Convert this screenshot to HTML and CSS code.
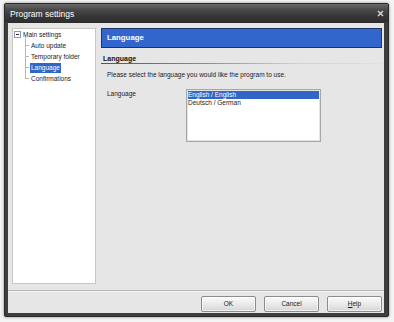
FILE: index.html
```html
<!DOCTYPE html>
<html>
<head>
<meta charset="utf-8">
<link rel="stylesheet" href="styles.css">
</head>
<body>
<div class="window">
  <div class="titlebar">
    <span class="title">Program settings</span>
    <svg class="close" width="7" height="7" viewBox="0 0 7 7"><path d="M1 1L6 6M6 1L1 6" stroke="#d8d8d8" stroke-width="1.4"/></svg>
  </div>
  <div class="client">
    <div class="main">
      <div class="tree">
        <div class="node root">
          <svg class="expander" width="7" height="7" viewBox="0 0 7 7"><rect x="0.5" y="0.5" width="6" height="6" fill="#fff" stroke="#8a9ab4"/><path d="M2 3.5H5" stroke="#333" stroke-width="1"/></svg>
          <span class="label">Main settings</span>
        </div>
        <div class="children">
          <div class="node child"><span class="label">Auto update</span></div>
          <div class="node child"><span class="label">Temporary folder</span></div>
          <div class="node child"><span class="label selected">Language</span></div>
          <div class="node child last"><span class="label">Confirmations</span></div>
        </div>
      </div>
      <div class="page">
        <div class="header">Language</div>
        <div class="section-title">Language</div>
        <div class="section-rule"></div>
        <div class="intro">Please select the language you would like the program to use.</div>
        <div class="form-row">
          <div class="form-label">Language</div>
          <div class="listbox">
            <div class="item selected">English / English</div>
            <div class="item">Deutsch / German</div>
          </div>
        </div>
      </div>
    </div>
    <div class="separator"></div>
    <div class="footer">
      <button class="btn">OK</button>
      <button class="btn">Cancel</button>
      <button class="btn"><u>H</u>elp</button>
    </div>
  </div>
</div>
</body>
</html>
```
FILE: styles.css
```css
html, body {
  margin: 0;
  padding: 0;
  background: #f4f4f4;
}
body {
  width: 394px;
  height: 322px;
  overflow: hidden;
  font-family: "Liberation Sans", Arial, sans-serif;
}
.window {
  margin: 3px 0 0 4px;
  width: 385px;
  height: 314px;
  box-sizing: border-box;
  background: #3e3e3e;
  border: 1px solid #2a2a2a;
  border-radius: 2px;
  box-shadow: 0 0 3px rgba(0,0,0,0.45);
  display: flex;
  flex-direction: column;
}
.titlebar {
  height: 18px;
  flex: none;
  display: flex;
  align-items: center;
  justify-content: space-between;
  padding: 0 4px 0 5px;
  background: linear-gradient(#6a6a6a 0%, #4a4a4a 30%, #363636 70%, #2e2e2e 100%);
}
.title {
  color: #ffffff;
  font-size: 8.5px;
  line-height: 10px;
  padding-top: 1px;
}
.close {
  display: block;
  margin-top: 1px;
}
.client {
  flex: 1;
  margin: 0 4px 3px 3px;
  background: #e6e6e6;
  display: flex;
  flex-direction: column;
  border-top: 1px solid #2c2c2c;
}
.main {
  height: 267px;
  flex: none;
  display: flex;
  padding: 5px 2px 0 4px;
  box-sizing: border-box;
  gap: 5px;
}
.tree {
  width: 84px;
  height: 256px;
  flex: none;
  box-sizing: border-box;
  background: #ffffff;
  border: 1px solid #c8c8c0;
  font-size: 6.5px;
  color: #1a1a1a;
}
.node {
  height: 11px;
  display: flex;
  align-items: center;
  position: relative;
}
.root {
  padding-left: 1px;
}
.expander {
  display: block;
  margin-right: 1px;
}
.label {
  line-height: 10px;
  padding: 0 1px;
  white-space: nowrap;
}
.label.selected {
  background: #3166c6;
  color: #ffffff;
}
.children {
  padding-left: 17px;
}
.child::before {
  content: "";
  position: absolute;
  left: -5px;
  top: -3px;
  width: 4px;
  height: 14px;
  border-left: 1px solid #b8b8b8;
}
.child::after {
  content: "";
  position: absolute;
  left: -5px;
  top: 5px;
  width: 4px;
  border-top: 1px solid #b8b8b8;
}
.child.last::before {
  height: 8px;
}
.page {
  flex: 1;
  display: flex;
  flex-direction: column;
}
.header {
  height: 20px;
  box-sizing: border-box;
  background: #3366cc;
  border: 1px solid #1c3466;
  color: #ffffff;
  font-weight: bold;
  font-size: 7.8px;
  line-height: 18px;
  padding-left: 5px;
}
.section-title {
  margin-top: 6px;
  font-weight: bold;
  font-size: 7px;
  line-height: 9px;
  padding-left: 2px;
  color: #111;
}
.section-rule {
  height: 1px;
  background: linear-gradient(to right, #34589a 0%, #6f8cc0 35%, #c8d2e2 70%, #e0e0e0 100%);
}
.intro {
  margin-top: 7px;
  font-size: 6.5px;
  line-height: 8px;
  padding-left: 6px;
  color: #1a1a1a;
}
.form-row {
  margin-top: 10px;
  display: flex;
  font-size: 6.5px;
  color: #1a1a1a;
}
.form-label {
  width: 79px;
  padding-left: 6px;
  line-height: 9px;
}
.listbox {
  width: 135px;
  height: 53px;
  box-sizing: border-box;
  background: #ffffff;
  border: 1px solid #a6a6a6;
  box-shadow: inset 0 0 0 1px #e4e4e4;
  padding: 1px 1px 0 1px;
}
.item {
  line-height: 8px;
  height: 8px;
  padding-left: 0;
  white-space: nowrap;
}
.item.selected {
  background: #3166c6;
  color: #ffffff;
}
.separator {
  height: 1px;
  background: #b4b4b4;
  border-bottom: 1px solid #f4f4f4;
  flex: none;
}
.footer {
  flex: 1;
  display: flex;
  justify-content: flex-end;
  gap: 8px;
  padding: 4px 2px 0 0;
  box-sizing: border-box;
  align-items: flex-start;
}
.btn {
  width: 55px;
  height: 16px;
  padding: 0;
  margin: 0;
  box-sizing: border-box;
  border: 1px solid #8c8c8c;
  border-radius: 2px;
  background: linear-gradient(#fbfbfb 0%, #ececec 45%, #d6d6d6 100%);
  box-shadow: inset 0 0 0 1px rgba(255,255,255,0.6);
  font-family: "Liberation Sans", Arial, sans-serif;
  font-size: 6.5px;
  line-height: 14px;
  color: #222;
}
```
